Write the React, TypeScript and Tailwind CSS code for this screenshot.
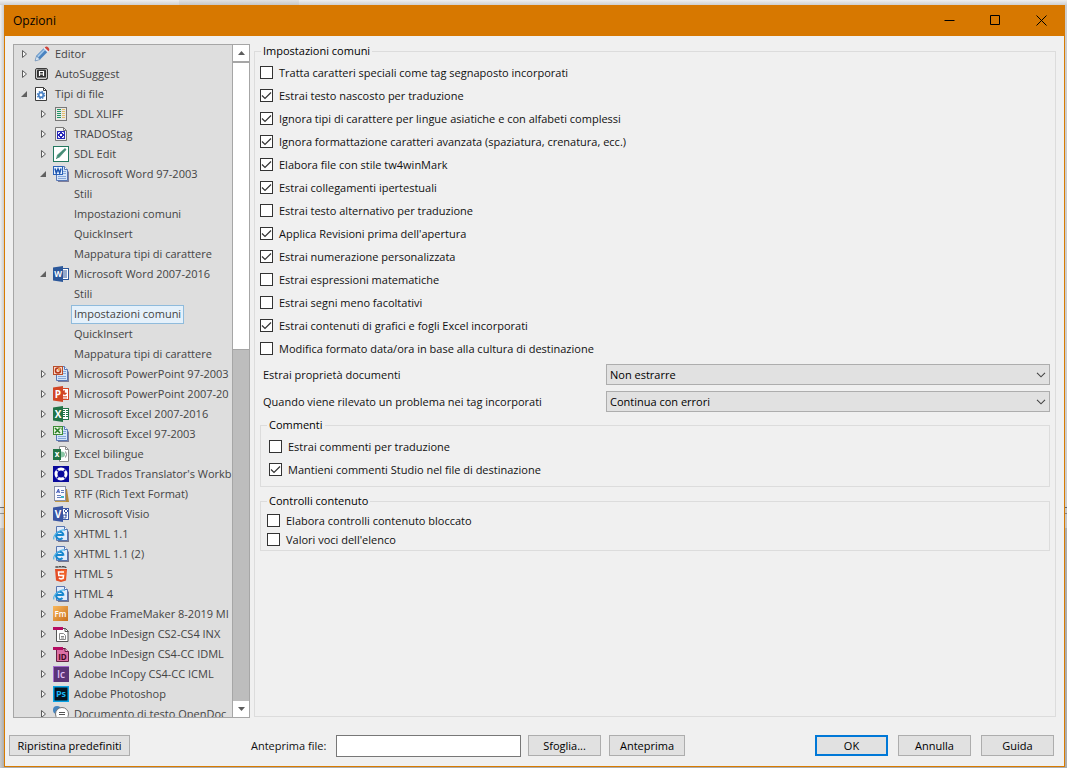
import React from "react";

type IconName =
  | "pencil" | "key" | "filegear" | "xliff" | "tag" | "edit" | "word03" | "word" | "ppt03" | "ppt"
  | "excel" | "excel03" | "bilingual" | "workbench" | "rtf" | "visio" | "ie" | "html5" | "fm"
  | "inx" | "idml" | "ic" | "ps" | "odt";

type Node = { label: string; level: 0 | 1 | 2; icon?: IconName; open?: boolean; selected?: boolean };

const nodes: Node[] = [
  { label: "Editor", level: 0, icon: "pencil" },
  { label: "AutoSuggest", level: 0, icon: "key" },
  { label: "Tipi di file", level: 0, icon: "filegear", open: true },
  { label: "SDL XLIFF", level: 1, icon: "xliff" },
  { label: "TRADOStag", level: 1, icon: "tag" },
  { label: "SDL Edit", level: 1, icon: "edit" },
  { label: "Microsoft Word 97-2003", level: 1, icon: "word03", open: true },
  { label: "Stili", level: 2 },
  { label: "Impostazioni comuni", level: 2 },
  { label: "QuickInsert", level: 2 },
  { label: "Mappatura tipi di carattere", level: 2 },
  { label: "Microsoft Word 2007-2016", level: 1, icon: "word", open: true },
  { label: "Stili", level: 2 },
  { label: "Impostazioni comuni", level: 2, selected: true },
  { label: "QuickInsert", level: 2 },
  { label: "Mappatura tipi di carattere", level: 2 },
  { label: "Microsoft PowerPoint 97-2003", level: 1, icon: "ppt03" },
  { label: "Microsoft PowerPoint 2007-20", level: 1, icon: "ppt" },
  { label: "Microsoft Excel 2007-2016", level: 1, icon: "excel" },
  { label: "Microsoft Excel 97-2003", level: 1, icon: "excel03" },
  { label: "Excel bilingue", level: 1, icon: "bilingual" },
  { label: "SDL Trados Translator's Workb", level: 1, icon: "workbench" },
  { label: "RTF (Rich Text Format)", level: 1, icon: "rtf" },
  { label: "Microsoft Visio", level: 1, icon: "visio" },
  { label: "XHTML 1.1", level: 1, icon: "ie" },
  { label: "XHTML 1.1 (2)", level: 1, icon: "ie" },
  { label: "HTML 5", level: 1, icon: "html5" },
  { label: "HTML 4", level: 1, icon: "ie" },
  { label: "Adobe FrameMaker 8-2019 MI", level: 1, icon: "fm" },
  { label: "Adobe InDesign CS2-CS4 INX", level: 1, icon: "inx" },
  { label: "Adobe InDesign CS4-CC IDML", level: 1, icon: "idml" },
  { label: "Adobe InCopy CS4-CC ICML", level: 1, icon: "ic" },
  { label: "Adobe Photoshop", level: 1, icon: "ps" },
  { label: "Documento di testo OpenDoc", level: 1, icon: "odt" },
];

const options: [string, boolean][] = [
  ["Tratta caratteri speciali come tag segnaposto incorporati", false],
  ["Estrai testo nascosto per traduzione", true],
  ["Ignora tipi di carattere per lingue asiatiche e con alfabeti complessi", true],
  ["Ignora formattazione caratteri avanzata (spaziatura, crenatura, ecc.)", true],
  ["Elabora file con stile tw4winMark", true],
  ["Estrai collegamenti ipertestuali", true],
  ["Estrai testo alternativo per traduzione", false],
  ["Applica Revisioni prima dell'apertura", true],
  ["Estrai numerazione personalizzata", true],
  ["Estrai espressioni matematiche", false],
  ["Estrai segni meno facoltativi", false],
  ["Estrai contenuti di grafici e fogli Excel incorporati", true],
  ["Modifica formato data/ora in base alla cultura di destinazione", false],
];

function Letters({ x, y, size, fill = "#fff", weight = 700, children }: { x: number; y: number; size: number; fill?: string; weight?: number; children: string }) {
  return (
    <text x={x} y={y} fontSize={size} fill={fill} fontFamily="Open Sans, sans-serif" fontWeight={weight} textAnchor="middle">
      {children}
    </text>
  );
}

/* Page with a folded corner shared by the 97-2003 and web document icons. */
function BluePage() {
  return (
    <>
      <path d="M14 4l2 2v10H5v-1h9z" fill="#7d7d99" />
      <path d="M3.500 .5h8l3 3v11h-11z" fill="#d5e5f8" stroke="#5777b5" />
      <path d="M11.500 .5v3h3" fill="#f4f9ff" stroke="#5777b5" />
      <path d="M10 5.500h3M10 7.500h3M5 10.500h8M5 12.500h8" stroke="#86a7db" />
    </>
  );
}

function OfficeFlag({ color }: { color: string }) {
  return <path d="M0 1.500L10 0v16L0 14.500z" fill={color} />;
}

const drawings: Record<IconName, React.ReactNode> = {
  pencil: (
    <>
      <path d="M1 15l1.500-5.500L10 2l4 3.500-8 8z" fill="#4a83c0" />
      <path d="M3 10l7-7 1.300 1-7 7.500z" fill="#a5c8e8" />
      <path d="M1 15l1.500-5L6 13.500z" fill="#d8e6f2" stroke="#6487ae" strokeWidth=".6" />
      <path d="M9.500 2.500l1-1 4 4-1 1z" fill="#e9eef4" />
      <path d="M10.700 1.500Q12.500-.3 14.300 1.500T14.500 5.300z" fill="#cf4238" />
    </>
  ),
  key: (
    <>
      <rect x="1.500" y="2.500" width="12" height="11" rx="1.500" fill="#c9c9c9" stroke="#3b3b3b" />
      <rect x="3" y="3.500" width="9" height="8" rx="1" fill="#303030" />
      <path d="M5.500 10V5.500h4V10M5.500 8h4" fill="none" stroke="#fff" strokeWidth="1.200" />
      <path d="M2 13l1.500-1.500M13 13l-1.500-1.500" stroke="#555" />
    </>
  ),
  filegear: (
    <>
      <path d="M1.500 1.500h8l3 3v10h-11z" fill="#fff" stroke="#3c3c3c" />
      <path d="M9.500 1.500v3h3" fill="none" stroke="#3c3c3c" />
      <circle cx="7" cy="9" r="3.400" fill="none" stroke="#4a82c4" strokeWidth="1.600" strokeDasharray="1.500 1.170" />
      <circle cx="7" cy="9" r="2.300" fill="none" stroke="#4a82c4" strokeWidth="1.700" />
    </>
  ),
  xliff: (
    <>
      <rect x="2.500" y="1.500" width="11" height="13" fill="#e8e8e4" stroke="#777" />
      <path d="M4 3.500h4M4 5.500h4M4 7.500h4M4 9.500h4M4 11.500h4" stroke="#1d9667" />
      <path d="M9 3.500h3M9 5.500h3M9 7.500h3M9 9.500h3M9 11.500h3" stroke="#e5bd6a" />
    </>
  ),
  tag: (
    <>
      <path d="M2.500 1.500h8l3 3v10h-11z" fill="#f0f0f0" stroke="#777" />
      <path d="M10.500 1.500v3h3" fill="none" stroke="#777" />
      <rect x="4" y="5" width="8" height="8" fill="#2a2ab8" />
      <path d="M5.500 8V6.500H7M9 6.500h1.500V8M10.500 10v1.500H9M7 11.500H5.500V10" fill="none" stroke="#fff" />
      <rect x="7" y="8" width="2" height="2" fill="#fff" />
    </>
  ),
  edit: (
    <>
      <rect x=".5" y=".5" width="15" height="15" fill="#fff" stroke="#23785f" />
      <path d="M3 13l1-4 8-7 1.500 1.500-7 8z" fill="#5c9a86" />
      <path d="M3 13l10-9.500M5 10l7-7" stroke="#23785f" strokeWidth=".7" strokeDasharray="1 .5" />
    </>
  ),
  word03: (
    <>
      <BluePage />
      <rect x=".5" y=".5" width="9" height="8" fill="#eaf3ff" stroke="#2b62b8" />
      <path d="M2 2.500l1.300 4.500L5 3l1.700 4L8 2.500" fill="none" stroke="#1c54ae" strokeWidth="1.500" />
    </>
  ),
  word: (
    <>
      <rect x="8.500" y="2.500" width="7" height="11" fill="#fff" stroke="#2b579a" />
      <path d="M10 5h4M10 7h4M10 9h4M10 11h4" stroke="#2b579a" />
      <OfficeFlag color="#2b579a" />
      <Letters x={5} y={11} size={8}>W</Letters>
    </>
  ),
  ppt03: (
    <>
      <BluePage />
      <rect x=".5" y=".5" width="9" height="8" fill="#f7d7c9" stroke="#b94d2a" />
      <circle cx="5" cy="4.500" r="2.500" fill="none" stroke="#b43415" strokeWidth="1.500" />
      <path d="M5 4.500V2h2.500v2.500z" fill="#e99a51" />
    </>
  ),
  ppt: (
    <>
      <rect x="8.500" y="2.500" width="7" height="11" fill="#fff" stroke="#d24625" />
      <path d="M11.500 4.500a2 2 0 1 0 2 2.500h-2zM10 10.500h4M10 12h4" fill="#d24625" stroke="#d24625" strokeWidth=".7" />
      <OfficeFlag color="#d24625" />
      <Letters x={5} y={12} size={10}>P</Letters>
    </>
  ),
  excel: (
    <>
      <rect x="8.500" y="2.500" width="7" height="11" fill="#fff" stroke="#217346" />
      <path d="M10 4.500h2M13 4.500h2M10 6.500h2M13 6.500h2M10 8.500h2M13 8.500h2M10 10.500h2M13 10.500h2" stroke="#217346" />
      <OfficeFlag color="#217346" />
      <Letters x={5} y={12} size={10}>X</Letters>
    </>
  ),
  excel03: (
    <>
      <BluePage />
      <rect x=".5" y=".5" width="9" height="8" fill="#e4f2dc" stroke="#3c8b34" />
      <path d="M2 2l5 5M7 2L2 7" stroke="#2a7d27" strokeWidth="1.600" />
      <path d="M5 2h3.500v2" fill="none" stroke="#8fbf7e" />
    </>
  ),
  bilingual: (
    <>
      <path d="M6.500 .5h6l3 3v12h-9z" fill="#fff" stroke="#8b8b8b" />
      <path d="M12.500 .5v3h3" fill="none" stroke="#8b8b8b" />
      <rect x="0" y="3" width="8" height="11" fill="#217346" />
      <path d="M8 5.500q4 0 4 3t-4 3z" fill="#8cc7a7" />
      <path d="M12.500 5.500q2 3 0 6" fill="none" stroke="#818181" />
      <Letters x={4} y={11} size={8}>x</Letters>
    </>
  ),
  workbench: (
    <>
      <rect width="16" height="16" fill="#08089b" />
      <circle cx="8" cy="8" r="5" fill="none" stroke="#fff" strokeWidth="3" />
      <path d="M3.500 3.500l2 2M12.500 3.500l-2 2M3.500 12.500l2-2M12.500 12.500l-2-2" stroke="#08089b" strokeWidth="1.300" />
    </>
  ),
  rtf: (
    <>
      <path d="M12 3h2l2 13h-4z" fill="#b28a3c" />
      <rect x="1.500" y=".5" width="11" height="14" fill="#f9f9ff" stroke="#8a91a7" />
      <path d="M3.500 7l2-4 .8 4M4 5.800h2.500" fill="none" stroke="#3a54b4" />
      <path d="M8 4.500h3M8 6.500h3M4 9.500h4M4 11.500h4" stroke="#647fbc" />
      <path d="M8 10h3v2H8z" fill="#3bb4c6" />
      <path d="M2 15.500h11" stroke="#c29b49" />
    </>
  ),
  visio: (
    <>
      <rect x="8.500" y="2.500" width="7" height="11" fill="#fff" stroke="#3955a3" />
      <path d="M11 5l2-2 2 2-2 2zM13 7v3M10 9h3v3h-3z" fill="none" stroke="#3955a3" />
      <OfficeFlag color="#3955a3" />
      <Letters x={5} y={12} size={10}>V</Letters>
    </>
  ),
  ie: (
    <>
      <path d="M14 4l2 2v10H5v-1h9z" fill="#77778e" />
      <path d="M3.500 .5h8l3 3v11h-11z" fill="#e1ecfa" stroke="#5775b0" />
      <path d="M11.500 .5v3h3" fill="#fff" stroke="#5775b0" />
      <path d="M10.500 9H3.500M10.500 9.500a3.700 3.700 0 1 0-1 2.500" fill="none" stroke="#1687ce" strokeWidth="2" />
      <path d="M1 13.500C-1 9 9 2 12 4.500" fill="none" stroke="#4fb3e7" strokeWidth="1.200" />
    </>
  ),
  html5: (
    <>
      <path d="M3 0v2M5 0v2M3 1h2M6 .5h2M7 .5V2M9 2V0l1 1 1-1v2M12 0v1.500h1.500" fill="none" stroke="#333" strokeWidth=".8" />
      <path d="M2 3h12l-1 11.500L8 16l-5-1.500z" fill="#e44d26" />
      <path d="M8 4h5l-.8 9.500L8 15z" fill="#f16529" />
      <path d="M11 6H5.500l.3 3.500h4.700l-.4 3L8 13l-2.200-.7" fill="none" stroke="#fff" strokeWidth="1.500" />
    </>
  ),
  fm: (
    <>
      <defs>
        <linearGradient id="fm" x2="1" y2="1"><stop stopColor="#f9b85c" /><stop offset="1" stopColor="#c9701d" /></linearGradient>
      </defs>
      <rect width="15" height="15" fill="url(#fm)" />
      <Letters x={7.500} y={11} size={8} weight={600}>Fm</Letters>
    </>
  ),
  inx: (
    <>
      <path d="M3.500 2.500h9l2.500 2.500v10.500H3.500z" fill="#fff" stroke="#555" />
      <rect x="0" y="1" width="10" height="3" fill="#b50c62" />
      <path d="M12 2v3.500h3.500" fill="none" stroke="#555" />
      <path d="M6.500 7.500h4l2 2v4h-6z" fill="#fff" stroke="#888" />
      <path d="M8 10.500h3M8 12h3" stroke="#888" />
    </>
  ),
  idml: (
    <>
      <path d="M3.500 2.500h9l3 3v10h-12z" fill="#dc70a5" stroke="#642044" />
      <rect x="0" y="1" width="10" height="3" fill="#b50c62" />
      <path d="M12 2v3.500h3.500" fill="#f1bbd6" stroke="#642044" />
      <Letters x={9.500} y={14} size={8} fill="#3c0821">ID</Letters>
    </>
  ),
  ic: (
    <>
      <rect width="16" height="16" fill="#5b3477" />
      <path d="M0 .5h16M.5 0v16" stroke="#a46ad0" />
      <Letters x={8} y={12} size={10} weight={600} fill="#e0bff4">Ic</Letters>
    </>
  ),
  ps: (
    <>
      <rect x=".75" y=".75" width="14.500" height="14.500" fill="#04141f" stroke="#08a3e5" strokeWidth="1.500" />
      <Letters x={8} y={11} size={9} fill="#19b6f5">Ps</Letters>
    </>
  ),
  odt: (
    <>
      <circle cx="4" cy="4" r="4" fill="#4685bf" />
      <circle cx="9" cy="8" r="6.500" fill="#fff" stroke="#777" />
      <path d="M6 6.500h6M6 8.500h6" stroke="#555" />
    </>
  ),
};

function FileIcon({ name }: { name: IconName }) {
  return (
    <svg viewBox="0 0 16 16" className="size-4 shrink-0" aria-hidden="true">
      {drawings[name]}
    </svg>
  );
}

function TreeRow({ node }: { node: Node }) {
  const indent = node.level === 0 ? "pl-1" : node.level === 1 ? "pl-[23px]" : "pl-[57px]";
  return (
    <li className={`flex h-5 items-center whitespace-nowrap ${indent}`}>
      {node.icon && (
        <>
          <button type="button" aria-label={`Espandi ${node.label}`} className="mr-1 flex size-3 shrink-0 items-center justify-center">
            <svg viewBox="0 0 8 8" className="size-2" aria-hidden="true">
              {node.open ? <path d="M7 1v6H1z" fill="#606060" /> : <path d="M2.500 .5v7L6.500 4z" fill="#f4f4f4" stroke="#5c5c5c" />}
            </svg>
          </button>
          <span className="mr-[2px]">
            <FileIcon name={node.icon} />
          </span>
        </>
      )}
      <a
        href="#"
        className={`border px-[2px] pb-[2px] leading-[15px] ${node.selected ? "border-[#8fbbdc] bg-[#e5f1fb]" : "border-transparent"}`}
      >
        {node.label}
      </a>
    </li>
  );
}

function Check({ label, checked, tight }: { label: string; checked?: boolean; tight?: boolean }) {
  return (
    <label className={`flex items-center gap-[6px] ${tight ? "h-[19px]" : "h-[23px]"}`}>
      <span className="grid size-[13px] shrink-0">
        <input
          type="checkbox"
          defaultChecked={checked}
          className="peer col-start-1 row-start-1 size-[13px] appearance-none border border-[#333] bg-white"
        />
        <svg viewBox="0 0 13 13" className="pointer-events-none invisible col-start-1 row-start-1 size-[13px] peer-checked:visible" aria-hidden="true">
          <path d="M2 6.500l3 3 6-6" fill="none" stroke="#333" strokeWidth="1.200" />
        </svg>
      </span>
      <span className="pt-px">{label}</span>
    </label>
  );
}

function SelectRow({ id, label, value }: { id: string; label: string; value: string }) {
  return (
    <div className="flex h-[21px] items-center">
      <label htmlFor={id} className="w-[346px] shrink-0 pt-px pl-[3px]">{label}</label>
      <span className="grid min-w-0 flex-1">
        <select id={id} className="col-start-1 row-start-1 h-[21px] w-full appearance-none border border-[#adadad] bg-[#e1e1e1] px-[3px] pt-px text-black">
          <option>{value}</option>
        </select>
        <svg viewBox="0 0 10 6" className="pointer-events-none col-start-1 row-start-1 mr-1 h-[6px] w-[10px] self-center justify-self-end" aria-hidden="true">
          <path d="M1 .8l4 4 4-4" fill="none" stroke="#444" strokeWidth="1.100" />
        </svg>
      </span>
    </div>
  );
}

function PushButton({ children, width, primary }: { children: string; width: string; primary?: boolean }) {
  return (
    <button
      type="button"
      className={`flex h-[21px] shrink-0 items-center justify-center bg-[#e1e1e1] text-black ${width} ${primary ? "border-2 border-[#0078d7]" : "border border-[#adadad]"}`}
    >
      {children}
    </button>
  );
}

function ScrollArrow({ up }: { up?: boolean }) {
  return (
    <button type="button" aria-label={up ? "Scorri su" : "Scorri giù"} className="flex h-4 shrink-0 items-center justify-center bg-white">
      <svg viewBox="0 0 7 4" className="h-1 w-[7px]" aria-hidden="true">
        <path d={up ? "M0 4l3.500-4L7 4z" : "M0 0l3.500 4L7 0z"} fill="#5c5c5c" />
      </svg>
    </button>
  );
}

const groupBox = "border border-[#dcdcdc]";

export default function App() {
  return (
    <div className="flex h-screen flex-col bg-[linear-gradient(to_right,transparent,rgba(0,0,0,0.14)_4px,rgba(0,0,0,0.14)),linear-gradient(#efefef_0_507px,#777_507px_508px,#e6e6e6_508px_513px,#999_513px_514px,#e6e6e6_514px_528px,#cacaca_528px)] pr-[2px] pb-[1px] pl-1 font-['Open_Sans','Noto_Sans',sans-serif] text-[11px] leading-4 text-[#111]">
      <div className="-mr-[2px] -ml-1 flex h-[5px] shrink-0 bg-linear-to-b from-[#efefef] to-[#cfcfcf]">
        <span className="ml-[179px] w-[120px] bg-linear-to-b from-[#e2e2e2] to-[#c6c6c6]" />
      </div>
      <main className="flex min-h-0 flex-1 flex-col border-x border-b border-[#d87b00] bg-[#f0f0f0]">
        <header className="-mx-px flex h-[31px] shrink-0 items-center bg-[#d77800] pr-px text-black">
          <h1 className="flex-1 pl-[9px] text-[12px]">Opzioni</h1>
          <button type="button" aria-label="Riduci a icona" className="flex h-full w-[46px] items-center justify-center">
            <svg viewBox="0 0 11 11" className="size-[11px]" aria-hidden="true"><path d="M.5 5.500h10" stroke="#000" /></svg>
          </button>
          <button type="button" aria-label="Ingrandisci" className="flex h-full w-[46px] items-center justify-center">
            <svg viewBox="0 0 11 11" className="size-[11px]" aria-hidden="true"><path d="M.5 .5h9v9h-9z" fill="none" stroke="#000" /></svg>
          </button>
          <button type="button" aria-label="Chiudi" className="flex h-full w-[46px] items-center justify-center">
            <svg viewBox="0 0 11 11" className="size-[11px]" aria-hidden="true"><path d="M.5 .5l10 10M10.500 .5l-10 10" stroke="#000" /></svg>
          </button>
        </header>

        <div className="flex min-h-0 flex-1 gap-1 pt-[7px] pr-2 pl-2">
          <nav aria-label="Opzioni" className="mt-px flex w-[237px] shrink-0 border border-[#a6a6a6] bg-[#dedede] text-[#444]">
            <ul className="-mt-px min-w-0 flex-1 overflow-hidden">
              {nodes.map((node, i) => <TreeRow key={i} node={node} />)}
            </ul>
            <div className="flex w-[17px] shrink-0 flex-col border-l border-[#a6a6a6] bg-[#bdbdbd]">
              <ScrollArrow up />
              <div className="h-[289px] border-t-2 border-b border-[#a6a6a6] bg-white" />
              <div className="flex-1" />
              <ScrollArrow />
            </div>
          </nav>

          <fieldset className={`mb-px min-w-0 flex-1 px-[5px] ${groupBox}`}>
            <legend className="ml-px px-[2px] text-black">Impostazioni comuni</legend>
            <div className="pt-[2px]">
              {options.map(([label, checked]) => <Check key={label} label={label} checked={checked} />)}
            </div>
            <div className="flex flex-col gap-[6px] pt-1">
              <SelectRow id="props" label="Estrai proprietà documenti" value="Non estrarre" />
              <SelectRow id="tags" label="Quando viene rilevato un problema nei tag incorporati" value="Continua con errori" />
            </div>
            <fieldset className={`mt-[5px] px-2 pt-[2px] pb-[5px] ${groupBox}`}>
              <legend className="-ml-[2px] px-[2px] text-black">Commenti</legend>
              <Check label="Estrai commenti per traduzione" />
              <Check label="Mantieni commenti Studio nel file di destinazione" checked />
            </fieldset>
            <fieldset className={`mt-[6px] px-[6px] pt-[2px] pb-px ${groupBox}`}>
              <legend className="px-[2px] text-black">Controlli contenuto</legend>
              <Check label="Elabora controlli contenuto bloccato" tight />
              <Check label="Valori voci dell'elenco" tight />
            </fieldset>
          </fieldset>
        </div>

        <footer className="flex shrink-0 items-start pt-[17px] pr-[10px] pb-[9px] pl-1">
          <PushButton width="w-[121px]">Ripristina predefiniti</PushButton>
          <label htmlFor="preview" className="ml-[121px] w-[85px] shrink-0 leading-[21px]">Anteprima file:</label>
          <input id="preview" type="text" className="h-[22px] w-[185px] min-w-0 border border-[#777] bg-white px-1" />
          <div className="ml-[7px] flex gap-2">
            <PushButton width="w-[73px]">Sfoglia...</PushButton>
            <PushButton width="w-[76px]">Anteprima</PushButton>
          </div>
          <div className="ml-auto flex gap-[10px]">
            <PushButton width="w-[73px]" primary>OK</PushButton>
            <PushButton width="w-[73px]">Annulla</PushButton>
            <PushButton width="w-[73px]">Guida</PushButton>
          </div>
        </footer>
      </main>
    </div>
  );
}
